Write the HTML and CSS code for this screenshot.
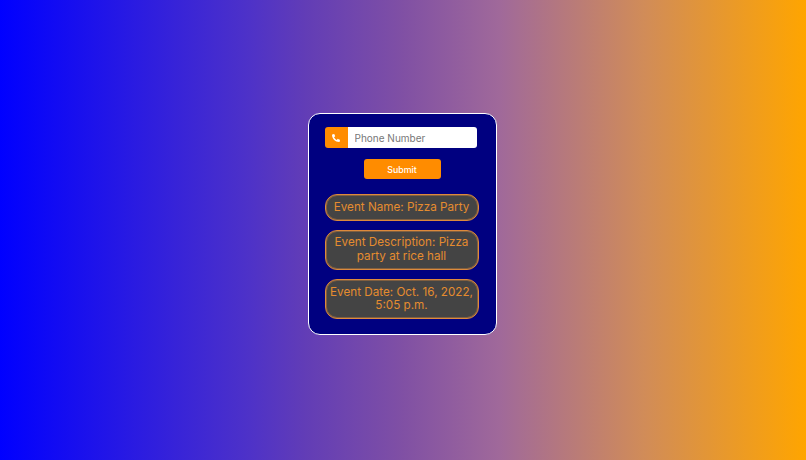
FILE: index.html
```html
<!DOCTYPE html>
<html lang="en">
<head>
    <meta charset="UTF-8">
    <meta name="viewport" content="width=device-width, initial-scale=1.0">
    <title>Event Lookup</title>
    <link rel="stylesheet" href="styles.css">
</head>
<body>

    <div class="card">
        <form class="phone-form">
            <div class="input-group">
                <span class="input-icon">
                    <svg width="8" height="8" viewBox="0 0 512 512"><path fill="#fff" d="M493 24L389 0c-11-3-23 3-27 14l-48 112c-4 10-1 21 7 28l61 50c-36 76-98 140-176 176l-50-61c-7-8-18-11-28-7L14 360c-11 5-17 17-14 28l24 104c3 11 12 20 24 20 256 0 464-207 464-464 0-11-8-21-19-24z" transform="matrix(-1 0 0 1 512 0)"/></svg>
                </span>
                <input type="text" class="phone-input" placeholder="Phone Number">
            </div>
            <button type="button" class="submit-btn">Submit</button>
        </form>

        <div class="event-box">Event Name: Pizza Party</div>
        <div class="event-box">Event Description: Pizza party at rice hall</div>
        <div class="event-box">Event Date: Oct. 16, 2022, 5:05 p.m.</div>
    </div>

</body>
</html>
```

FILE: styles.css
```css
* {
    box-sizing: border-box;
}

html, body {
    height: 100%;
}

body {
    margin: 0;
    display: flex;
    align-items: center;
    justify-content: center;
    background: linear-gradient(to right, #0000ff, #4e32c8 31%, #623db6 38%, #8050a4 50%, #a0699a 62%, #d18c58 80%, #ffa500);
    font-family: "Inter", "Noto Sans", sans-serif;
}

.card {
    width: 189px;
    height: 222px;
    margin-top: -12px;
    margin-right: 2px;
    padding: 13px 17px 0 16px;
    background-color: #000080;
    border: 1px solid #fff;
    border-radius: 12px;
}

.phone-form {
    display: flex;
    flex-direction: column;
    align-items: center;
}

.input-group {
    display: flex;
    align-self: flex-start;
    width: 152.5px;
    height: 21px;
}

.input-icon {
    display: flex;
    align-items: center;
    justify-content: center;
    width: 23px;
    background-color: #ff8c00;
    border-radius: 3px 0 0 3px;
}

.phone-input {
    flex: 1;
    min-width: 0;
    padding: 0 7px;
    font-family: inherit;
    font-size: 10px;
    background-color: #fff;
    border: none;
    border-radius: 0 3px 3px 0;
    outline: none;
}

.phone-input::placeholder {
    color: #777;
    opacity: 1;
}

.submit-btn {
    width: 77px;
    height: 20px;
    margin-top: 11px;
    margin-bottom: 15px;
    margin-left: 1px;
    padding: 0;
    font-family: inherit;
    font-size: 8.8px;
    font-weight: 500;
    color: #fff;
    background-color: #ff8c00;
    border: none;
    border-radius: 3px;
}

.event-box {
    width: 154px;
    margin-bottom: 9.3px;
    padding: 5.5px 3px;
    font-size: 11.7px;
    line-height: 13.5px;
    text-align: center;
    color: #e58c2f;
    background-color: #444;
    border: 1px solid #dd8a3c;
    border-radius: 12px;
    box-shadow: inset 0 0 0 1px rgba(221, 138, 60, 0.4);
}
```
